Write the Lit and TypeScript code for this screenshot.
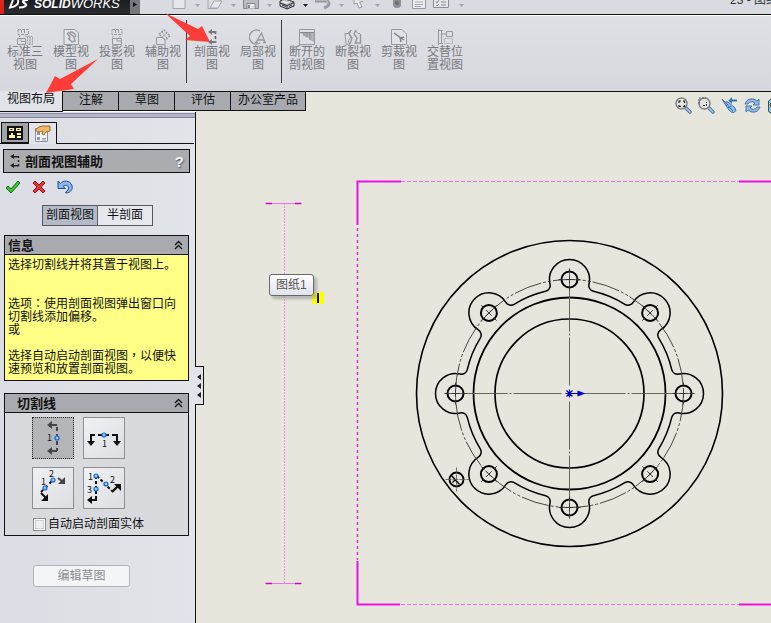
import { LitElement, html, svg, css } from "lit";
import { customElement, state } from "lit/decorators.js";

const S = (w: number, h: number, body: unknown) =>
  html`<svg width=${w} height=${h} viewBox="0 0 ${w} ${h}" fill="none" aria-hidden="true">${body}</svg>`;

/* ---------- title bar ---------- */
const dsLogo = S(24, 10, svg`<path d="M5 0 2 7.500C8 7 11 4 10 0" stroke="#fff" stroke-width="2"/>
  <path d="M20 0C14 0 14 2 17 3.500 20 5 17 7.500 11 7.500" stroke="#fff" stroke-width="2.200"/>`);

const quickIcons = {
  doc: S(18, 12, svg`<path d="M3 0V8.500H15V0" fill="#e6e7ea" stroke="#a4a6ab"/>`),
  open: S(18, 12, svg`<path d="M2 0V8.500H11L15 0" fill="#dcdde0" stroke="#a4a6ab"/><path d="M4 8 8 1H16L12 8Z" fill="#e8e8ea" stroke="#a4a6ab"/>`),
  save: S(18, 12, svg`<path d="M1.500 0V8.500H16.500V0" fill="#b9bbbf" stroke="#85878c"/><path d="M5 8.500V3.500H13V8.500" fill="#e6e7ea" stroke="#85878c"/><path d="M7 5V8" stroke="#85878c" stroke-width="2"/>`),
  print: S(18, 12, svg`<path d="M2 1 7-1 16 2V6L9 9 2 6Z" fill="#c4c5c8" stroke="#2f3034"/><path d="M2 3 9 5.500 16 2.500M9 5.500V9" stroke="#2f3034"/><path d="M4 1 9 3 12 1" stroke="#fff"/><path d="M4 5 8 6.500M11 6.500 14 5" stroke="#2f3034"/>`),
  undo: S(18, 12, svg`<path d="M1 1H11C16 1 17 5 10 8" stroke="#989a9f" stroke-width="3"/><path d="M2 0H10C14 0 15 3 10 6" stroke="#c9cacd"/>`),
  cursor: S(18, 12, svg`<path d="M4 0V4L7 3 9 8 12 7 9.500 2 13 1.500" fill="#eaebed" stroke="#9a9ca1"/>`),
  light: S(18, 12, svg`<path d="M5 0V5Q5 8 9 8T13 5V0Z" fill="#8d8f93"/><circle cx="9" cy="3" r="2" fill="#6b6d71"/>`),
  page: S(18, 12, svg`<path d="M2.500 0V8.500H15.500V0" fill="#ececee" stroke="#97999e"/><path d="M5 2H13M5 4.500H13M5 6.500H11" stroke="#a9abb0"/>`),
  list: S(18, 12, svg`<path d="M1.500 0V7.500H16.500V0" fill="#e4e5e8" stroke="#8c8e93"/><path d="M4 1.500 5 3 7 0M4 5 5 6 7 4M9 2H14M9 5H14" stroke="#85878c"/>`),
};
const caret = (c: string) => S(7, 4, svg`<path d="M1 0H6L3.500 3Z" fill=${c}/>`);

/* ---------- command ribbon ---------- */
const G = "#96989d";
const ribbonIcons = {
  standard: S(18, 16, svg`<g stroke=${G}><path d="M2 .500H12.500V5.500H2ZM5.500 1V5M8.500 1V5" stroke-dasharray="3 1"/><path d="M3.500 8V6.500M10 8V6.500M1.500 9.500H9.500V15.500H1.500Z"/><path d="M5 12.500H9M5 10V12"/><path d="M11.500 7.500H16.500V15.500H11.500Z" stroke-dasharray="2 1"/><path d="M14 8V15"/></g>`),
  model: S(18, 16, svg`<path d="M2 .500H13L16.500 4V15.500H2Z" stroke=${G} fill="#e2e3e7"/><path d="M5 4 8 8 7 11M6 3 12 8 13 12 10 13 6 9M8 3Q13 3 14 8" stroke=${G} stroke-width="1.400"/>`),
  projected: S(18, 16, svg`<g stroke=${G}><path d="M4 .500H14V5.500H4ZM7.500 1V5M10.500 1V5" stroke-dasharray="3 1"/><path d="M5 8.500V7M12 8.500V7"/><path d="M4.500 9.500H13.500V15.500H4.500Z" fill="#dfe0e4"/><path d="M9 10V12H13"/></g>`),
  auxiliary: S(18, 16, svg`<g stroke=${G}><path d="M5 5 10 1 16 7 11 11Z" stroke-dasharray="2 1" stroke-width="1.400"/><path d="M8 3 13 9M13 4 8 8" stroke-dasharray="2 1"/><path d="M2.500 8.500H8L11 11V15.500H2.500Z" fill="#dfe0e4"/></g>`),
  section: S(18, 16, svg`<path d="M12.500 2V14" stroke="#55575c" stroke-width="1.500" stroke-dasharray="3 2"/><path d="M5 3 9 0V2H13V4H9V6ZM5 13 9 10V12H13V14H9V16Z" fill="#77797e"/>`),
  detail: S(18, 16, svg`<path d="M11 2A7 7 0 1 0 11 14" stroke=${G} stroke-width="1.400"/><path d="M7 13.500 12.500 4 16 13.500M9 11H15M6 13.500H9M14 13.500H17" stroke=${G} stroke-width="1.300"/>`),
  broken: S(18, 16, svg`<path d="M1.500 .500H16.500V15.500H1.500Z" stroke=${G} fill="#dfe0e4"/><path d="M2 4 6 6 7 8 11 9 12 11 16 13V4Z" fill="#b2b4b8"/><path d="M2 3.500H16M6 4V7M9 4V8M12 4V11" stroke="#85878c"/>`),
  breakv: S(18, 16, svg`<path d="M1 4.500H4L7 1 5 4 7 8 4 12 6 15H2ZM16 4.500H14L11 1" stroke=${G}/><path d="M7 1 5 5 8 9 6 15M12 1 10 5 13 9 11 15M16.500 5V14H12" stroke=${G} stroke-width="1.400"/>`),
  crop: S(18, 16, svg`<path d="M1.500 .500H12L16.500 5V15.500H1.500Z" fill="#e1e2e6" stroke=${G}/><path d="M4 4 11 9 14 8M10 8 11 13M8 7 14 11" stroke="#7d7f84" stroke-width="1.500"/>`),
  alternate: S(18, 16, svg`<g stroke=${G}><path d="M2.500 0V16M2 1.500H7M2 14.500H7M5.500 1V15"/><path d="M10.500 2.500H16.500V7.500H10.500ZM6 5H10"/><path d="M8.500 9.500H16.500V14.500H8.500Z" stroke-dasharray="1 1"/></g>`),
};
type RIcon = keyof typeof ribbonIcons;
const ribbonGroups: [RIcon, string][][] = [
  [["standard", "标准三视图"], ["model", "模型视图"], ["projected", "投影视图"], ["auxiliary", "辅助视图"]],
  [["section", "剖面视图"], ["detail", "局部视图"]],
  [["broken", "断开的剖视图"], ["breakv", "断裂视图"], ["crop", "剪裁视图"], ["alternate", "交替位置视图"]],
];

/* ---------- property panel ---------- */
const treeIcon = S(18, 16, svg`<path d="M1 1H17V15H1Z" fill="#111"/><path d="M3 3H8V6H3ZM10 3H15V6H10ZM5 8H7V10H9V13H3V10H5ZM11 8H15V10H11ZM11 11H15V13H11Z" fill="#fff3a0"/><path d="M4.500 4.500H6.500M11.500 4.500H13.500" stroke="#111"/>`);
const propIcon = S(18, 18, svg`<path d="M1.500 3.500H13.500V16.500H1.500Z" fill="#f4f5f8" stroke="#8a8ea0"/><path d="M3 7H6V10H3ZM3 12H6V15H3Z" fill="#8f97b5"/><path d="M8 13.500H12M8 15H12" stroke="#9a9aa4"/><path d="M1 5 5 2 8 1 16 1V6L12 7 10 10 8 9 9 6 4 7Z" fill="#f0b765" stroke="#8a5a20" stroke-width=".800"/>`);
const sectionSmall = S(12, 16, svg`<path d="M9.500 3V14" stroke="#222" stroke-width="1.500" stroke-dasharray="2 2"/><path d="M1 3.500 5 1V3H10V4.500H5V6ZM1 12.500 5 10V12H10V13.500H5V15Z" fill="#222"/>`);
const okIcon = S(16, 14, svg`<path d="M1 8 3 6 6 9 13 1 15 3 6 13Z" fill="#3cc63c" stroke="#0c6d14"/>`);
const cancelIcon = S(16, 14, svg`<path d="M2 3 4 1 8 5 12 1 14 3 10 7 14 11 12 13 8 9 4 13 2 11 6 7Z" fill="#e23a3a" stroke="#981016"/>`);
const undoIcon = S(16, 14, svg`<path d="M1 1V8.500H8.500L6 6.500C9 4 12.500 6 11.500 9L8.500 13C14 13 16 9 15 5.500 13 0 6 0 3.500 3.500Z" fill="#8ab8ee" stroke="#1f4f9c"/>`);
const chevrons = S(9, 10, svg`<path d="M1 5 4.500 1.500 8 5M1 9 4.500 5.500 8 9" stroke="#111" stroke-width="1.300"/>`);
const dot = (x: number, y: number) => svg`<circle cx=${x} cy=${y} r="2" fill="#8cc8ff" stroke="#1d66c9" stroke-width="1.200"/>`;
const digit = (x: number, y: number, t: string) => svg`<text x=${x} y=${y} font-family="Noto Sans CJK SC" font-size="9" fill="#111">${t}</text>`;

const cutIcons = [
  { name: "竖直", icon: S(40, 40, svg`<g fill="#46464a"><path d="M14 7 19 3V6H24V8H19V11ZM14 33 19 29V32H24V34H19V37Z"/></g><path d="M24 9V33" stroke="#46464a" stroke-width="2" stroke-dasharray="4 3"/>${digit(14, 23, "1")}${dot(24, 20)}`) },
  { name: "水平", icon: S(40, 40, svg`<path d="M7 17H34" stroke="#111" stroke-width="2" stroke-dasharray="4 3"/><path d="M6 16H8V23H11L7 28 3 23H6ZM32 16H34V23H37L33 28 29 23H32Z" fill="#111"/>${dot(20, 17)}${digit(18, 29, "1")}`) },
  { name: "辅助", icon: S(40, 40, svg`<path d="M8 24 21 11" stroke="#111" stroke-width="2" stroke-dasharray="3 3"/><path d="M25 10 30 14" stroke="#444" stroke-width="2"/><path d="M32 9V16H25Z" fill="#444"/><path d="M8 25 13 30" stroke="#111" stroke-width="2"/><path d="M15 26V33H8Z" fill="#111"/>${dot(12, 20)}${dot(20, 12)}${digit(8, 17, "1")}${digit(16, 9, "2")}`) },
  { name: "对齐", icon: S(40, 40, svg`<path d="M12 8V32M13 8 28 23" stroke="#111" stroke-width="2" stroke-dasharray="3 2"/><path d="M3 32 8 28V31H13V33H8V36Z" fill="#111"/><path d="M28 24 34 18" stroke="#111" stroke-width="2.400"/><path d="M30 16H37V23Z" fill="#111"/>${dot(12, 8)}${dot(12, 21)}${dot(22, 16)}${digit(4, 12, "1")}${digit(3, 25, "3")}${digit(26, 15, "2")}`) },
];

/* ---------- view tools ---------- */
const lens = (extra: unknown) => S(17, 17, svg`<path d="M10.500 10.500 15 15" stroke="#4c6f98" stroke-width="3.400" stroke-linecap="round"/><path d="M11 11 15 15" stroke="#a9cdef" stroke-width="1.600" stroke-linecap="round"/><circle cx="6.500" cy="6.500" r="5.500" fill="#e4e4e0" stroke="#7b7d80" stroke-width="1.400"/>${extra}`);
const viewTools = [
  { name: "整屏显示全图", icon: lens(svg`<path d="M4 6V4H6M8 4H9.500V6M9.500 8V9.500H8M6 9.500H4V8" stroke="#222" stroke-width="1.200"/>`) },
  { name: "局部放大", icon: lens(svg`<path d="M1 7V1H8" stroke="#55575a" stroke-dasharray="2 1"/><path d="M5 8.500H8.500V5" stroke="#222" stroke-dasharray="2 1"/>`) },
  { name: "上一视图", icon: S(17, 17, svg`<path d="M1 2 4 5 7 5 14 11Q16 14 13 15.500 10 16 8 13L4 7Z" fill="#8ec1ea" stroke="#3a72ab"/><path d="M4 5 12 14M7 7 5 9M10 9 7 11" stroke="#3a72ab"/><path d="M16 3.500H10" stroke="#3a72ab" stroke-width="2"/><path d="M11 0V7L7.500 3.500Z" fill="#3a72ab"/>`) },
  { name: "重建", icon: S(17, 17, svg`<path d="M1 7Q3 1 9 2 11 2.300 13 4L15 2V8H9L11 6Q7 3 4 7Z" fill="#8db9e2" stroke="#4878ac"/><path d="M16 10Q14 16 8 15 6 14.700 4 13L2 15V9H8L6 11Q10 14 13 10Z" fill="#8db9e2" stroke="#4878ac"/>`) },
  { name: "显示样式", icon: S(17, 17, svg`<path d="M1.500 4 5 1H16V13L12 16H4Q1 16 1.500 12Z" fill="#9ac4d8" stroke="#3b4b4c"/><path d="M3 7Q7 2 12 6V13H5Z" fill="#d9d49a" stroke="#3b4b4c"/>`) },
];

/* ---------- flange geometry ---------- */
const LOBES = 8;
const PITCH_R = 114;
const LOBE_R = 20;
const RIM_R = 105;
const FILLET = 6;
const at = (r: number, a: number): [number, number] => [r * Math.sin(a), -r * Math.cos(a)];
const fmt = (p: [number, number]) => `${p[0].toFixed(2)} ${p[1].toFixed(2)}`;

function rimPath(): string {
  const c = RIM_R + FILLET;
  const l = LOBE_R + FILLET;
  const half = Math.acos((c * c + PITCH_R * PITCH_R - l * l) / (2 * c * PITCH_R));
  let d = "";
  for (let i = 0; i < LOBES; i++) {
    const a = (i * 2 * Math.PI) / LOBES;
    const hub = at(PITCH_R, a);
    const touch = (s: number): [number, number] => {
      const f = at(c, a + s * half);
      return [hub[0] + ((f[0] - hub[0]) * LOBE_R) / l, hub[1] + ((f[1] - hub[1]) * LOBE_R) / l];
    };
    const start = fmt(at(RIM_R, a - half));
    d += i === 0 ? `M${start}` : `A${RIM_R} ${RIM_R} 0 0 1 ${start}`;
    d += `A${FILLET} ${FILLET} 0 0 0 ${fmt(touch(-1))}`;
    d += `A${LOBE_R} ${LOBE_R} 0 1 1 ${fmt(touch(1))}`;
    d += `A${FILLET} ${FILLET} 0 0 0 ${fmt(at(RIM_R, a + half))}`;
  }
  return `${d}A${RIM_R} ${RIM_R} 0 0 1 ${fmt(at(RIM_R, -half))}Z`;
}

const flange = svg`<g transform="translate(373.500 301.500)" fill="none" stroke="#000">
  <circle r="153" stroke-width="1.600"/>
  <circle r="96" stroke-width="1.800"/>
  <circle r="74.500" stroke-width="1.700"/>
  <path d=${rimPath()} stroke-width="1.500"/>
  <circle r=${PITCH_R} stroke="#333" stroke-width=".900" stroke-dasharray="28 2 3 2 3 2"/>
  <path d="M-125 0H-62M-60 0H-58M-56 0H-8M15 0H56M58 0H60M62 0H125M0-125V-62M0-60V-58M0-56V-8M0 8V56M0 58V60M0 62V125" stroke="#555" stroke-width=".900"/>
  ${Array.from({ length: LOBES }, (_, i) => svg`<g transform="rotate(${i * 45}) translate(0 ${-PITCH_R})">
    <circle r="8" stroke-width="2"/><path d="M-4 0H4M0-4V4M-11 0H-7M7 0H11M0-11V-7M0 7V11" stroke="#333" stroke-width=".900"/></g>`)}
  <g transform="translate(-113 86)"><circle r="7" stroke-width="1.800"/><path d="M-5-4 3 5M-4 3-1 0" stroke-width="1.400"/><path d="M-11 0H13M0-12V12" stroke="#555" stroke-width=".800" stroke-dasharray="6 1"/></g>
  <path d="M-4 0H10M0-4V4M-3-3 3 3M-3 3 3-3" stroke="#0000c8" stroke-width="1.200"/>
  <path d="M8-3 16 0 8 3Z" fill="#0000c8" stroke="none"/>
</g>`;

const sheet = svg`<g fill="none">
  <path d="M88.500 111V491" stroke="#ee8fea" stroke-dasharray="2 1"/>
  <path d="M69 111.500H106M69 491.500H106" stroke="#ee6fe8"/>
  <path d="M70 111.500H76M99 111.500H105M70 491.500H76M99 491.500H105" stroke="#d400c8" stroke-width="1.600"/>
  <path d="M205 89.500H543M205 512.500H543" stroke="#f56cf0" stroke-dasharray="4 2"/>
  <path d="M161.500 136V468" stroke="#e41ce0" stroke-width="1.400" stroke-dasharray="3 3"/>
  <path d="M205 89.500H161.500V133M161.500 469V512.500H204M543 89.500H575M543 512.500H575" stroke="#ea12e6" stroke-width="2"/>
</g>`;

@customElement("app-root")
export class AppRoot extends LitElement {
  @state() private tab = 0;
  @state() private cut = 0;
  @state() private mode = 0;

  static styles = css`
    :host { display: block; position: relative; overflow: hidden; font: 12px/13px "Liberation Sans", "Noto Sans CJK SC", sans-serif; color: #111; }
    * { box-sizing: border-box; }
    button { font: inherit; color: inherit; border: 0; padding: 0; margin: 0; background: none; display: flex; align-items: center; justify-content: center; }
    svg { display: block; flex: none; }
    h1, h2, p { margin: 0; font: inherit; }
    .app { display: flex; flex-direction: column; min-height: 100vh; }

    .titlebar { display: flex; height: 15px; overflow: hidden; background: #d9dbe0; border-bottom: 1px solid #111; }
    .brand { display: flex; width: 130px; background: linear-gradient(#1a1c20, #2b2d32); border-left: 4px solid #dc2418; padding-left: 4px; gap: 2px; color: #fff; }
    .name { font-size: 13px; line-height: 14px; font-style: italic; margin-top: -3px; white-space: nowrap; }
    .name b { font-size: 12px; }
    .expand { width: 10px; background: #77797f; margin-right: 30px; }
    .quick { display: flex; flex: 1; align-items: flex-start; }
    .quick button { width: 18px; height: 12px; }
    .quick .wide { width: 22px; }
    .doc { width: 41px; white-space: nowrap; font-size: 12px; margin-top: -6px; color: #333; }

    .ribbon { display: flex; height: 77px; padding: 4px 2px; background: linear-gradient(#dfe0e5, #d6d8dd); border-top: 1px solid #fff; border-bottom: 1px solid #111; }
    .group { display: flex; }
    .group + .group { border-left: 1px solid #3a3b3f; padding-left: 2px; margin-bottom: 4px; }
    .group button { width: 46px; flex-direction: column; justify-content: flex-start; padding: 9px 4px 0; color: #77797e; gap: 1px; }

    .work { flex: 1; display: grid; grid-template-columns: 196px 1fr; grid-template-rows: 20px 1fr; }
    .tabs { grid-area: 1 / 1 / 2 / 3; display: flex; align-items: flex-start; z-index: 1; justify-self: start; }
    .tabs button { height: 19px; padding: 0 15px 2px 16px; background: #a8aaaf; border: solid #111; border-width: 0 1px 1px 0; }
    .tabs button:last-child { padding: 0 7px 2px; }
    .tabs .on { height: 21px; margin-top: -1px; padding: 0 7px 3px; background: #e1e3e8; }

    .panel { grid-area: 2 / 1; border-right: 1px solid #111; padding-top: 6px; display: flex; flex-direction: column; position: relative;
      background-image: linear-gradient(#8f8fa8 0 1px, #b4b4c8 1px 4px, #85859c 4px 5px, transparent 5px), linear-gradient(90deg, #dcdde4, #e1e4e9); background-size: 100% 5px, auto; background-position: 0 1px, 0 0; background-repeat: no-repeat; }
    .pages { display: flex; padding: 4px 1px 0; height: 26px; border-bottom: 1px solid #111; margin-right: 1px; }
    .pages button { width: 28px; height: 21px; border: 1px solid #111; background: #a2a3a8; }
    .pages .on { height: 22px; border-width: 1px 1px 0 0; background: #e3e5ea; }
    .head { margin: 5px 5px 0 3px; height: 24px; border: 1px solid #111; background: #abacb0; display: flex; align-items: center; padding: 0 5px; font-size: 13px; font-weight: bold; }
    .head h1 { flex: 1; margin-left: 4px; }
    .help { color: #eee; font-weight: bold; font-size: 15px; text-shadow: 1px 1px 1px #666; }
    .confirm { display: flex; gap: 10px; padding: 7px 5px 0; height: 32px; align-items: flex-start; }
    .modes { display: flex; align-self: center; border: 1px solid #55585f; height: 21px; }
    .modes button { width: 54px; background: #e6e8ed; }
    .modes .on { width: 55px; background: #b5bac9; border-right: 1px solid #666; }
    .box { margin: 9px 6px 0 4px; border: 1px solid #111; background: #d8dade; }
    .bar { display: flex; height: 19px; align-items: center; padding: 0 5px 0 3px; background: #a9aaaf; border-bottom: 1px solid #111; font-size: 13px; font-weight: bold; }
    .bar h2 { flex: 1; }
    .info { background: #ffff85; padding: 4px 3px; }
    .info p { min-height: 13px; }
    .mid { font-family: "Liberation Sans", "Noto Sans CJK TC", sans-serif; line-height: 1px; }
    .cuts { margin-top: 12px; }
    .cuts .bar { padding-left: 12px; }
    .grid { display: grid; grid-template-columns: 42px 42px; gap: 8px 9px; padding: 4px 0 0 27px; }
    .grid button { height: 42px; border: 1px solid #8d8f95; background: linear-gradient(135deg, #f0f1f4, #dcdee2); }
    .grid .on { background: #b4b5b8; border: 1px dotted #222; }
    .auto { display: flex; align-items: center; gap: 2px; padding: 7px 0 2px 28px; height: 26px; }
    .auto input { appearance: none; width: 13px; height: 13px; margin: 0; border: 1px solid #8b8d92; background: #eeeff1; box-shadow: inset 0 0 0 1px #fff, inset 0 0 0 2px #ccced2; }
    .edit { width: 97px; height: 22px; margin: 29px 0 0 33px; border: 1px solid #b1b3b8; border-radius: 3px; background: #f4f5f7; color: #8b8d91; }
    .handle { position: absolute; left: 195px; top: 254px; width: 9px; height: 39px; background: #e1e3e8; border: 1px solid #111; border-left: 0; z-index: 2; }

    .canvas { grid-area: 1 / 2 / 3 / 3; background: #e6e6dc; position: relative; overflow: hidden; min-height: 531px; }
    .drawing { width: 100%; height: 100%; }
    .views { position: absolute; top: 5px; right: -13px; display: flex; gap: 6px; }
    .tip { position: absolute; left: 73px; top: 182px; height: 22px; padding: 3px 6px; border: 1px solid #66686c; border-radius: 3px; background: linear-gradient(#fff, #e2e3ec); color: #555; box-shadow: 3px 3px 3px #8888; line-height: 14px; }
    .mark { position: absolute; left: 116px; top: 200px; width: 12px; height: 12px; background: #ff0; display: grid; place-items: center; }
    .mark::before { content: ""; width: 2px; height: 10px; background: #111; }
    .notes { position: absolute; left: 0; top: 0; z-index: 3; pointer-events: none; }
  `;

  render() {
    const q = quickIcons;
    const tabs = ["视图布局", "注解", "草图", "评估", "办公室产品"];
    const paired: [unknown, string][] = [[q.doc, "新建"], [q.open, "打开"], [q.save, "保存"], [q.print, "打印"], [q.undo, "撤消"], [q.cursor, "选择"]];
    return html`
      <div class="app">
        <header class="titlebar">
          <div class="brand">${dsLogo}<span class="name"><b>SOLID</b>WORKS</span></div>
          <button class="expand" aria-label="菜单">${S(6, 10, svg`<path d="M1 0 5 2.500 1 5Z" fill="#111"/>`)}</button>
          <nav class="quick">
            ${paired.map(([icon, name], i) => html`<button aria-label=${name}>${icon}</button><button aria-label="${name}选项">${caret(i === 3 ? "#222" : "#a0a2a7")}</button>`)}
            <button class="wide" aria-label="重建">${q.light}</button>
            <button class="wide" aria-label="属性">${q.page}</button>
            <button class="wide" aria-label="选项">${q.list}</button>
            <button aria-label="更多">${caret("#a0a2a7")}</button>
          </nav>
          <span class="doc">23 - 图纸</span>
        </header>
        <nav class="ribbon">
          ${ribbonGroups.map((g) => html`<div class="group">${g.map(([icon, label]) => html`<button>${ribbonIcons[icon]}<span>${label}</span></button>`)}</div>`)}
        </nav>
        <main class="work">
          <nav class="tabs">
            ${tabs.map((t, i) => html`<button class=${i === this.tab ? "on" : ""} @click=${() => (this.tab = i)}>${t}</button>`)}
          </nav>
          <aside class="panel">
            <div class="pages"><button aria-label="设计树">${treeIcon}</button><button class="on" aria-label="属性">${propIcon}</button></div>
            <div class="head">${sectionSmall}<h1>剖面视图辅助</h1><button class="help">?</button></div>
            <div class="confirm"><button aria-label="确定">${okIcon}</button><button aria-label="取消">${cancelIcon}</button><button aria-label="撤消">${undoIcon}</button></div>
            <div class="modes">
              ${["剖面视图", "半剖面"].map((t, i) => html`<button class=${i === this.mode ? "on" : ""} @click=${() => (this.mode = i)}>${t}</button>`)}
            </div>
            <section class="box">
              <div class="bar"><h2>信息</h2><button aria-label="折叠">${chevrons}</button></div>
              <div class="info">
                <p>选择切割线并将其置于视图上。</p><p></p><p></p>
                <p>选项<span class="mid">：</span>使用剖面视图弹出窗口向切割线添加偏移。</p>
                <p>或</p><p></p>
                <p>选择自动启动剖面视图<span class="mid">，</span>以便快速预览和放置剖面视图。</p>
              </div>
            </section>
            <section class="box cuts">
              <div class="bar"><h2>切割线</h2><button aria-label="折叠">${chevrons}</button></div>
              <div class="grid">
                ${cutIcons.map((c, i) => html`<button class=${i === this.cut ? "on" : ""} aria-label=${c.name} @click=${() => (this.cut = i)}>${c.icon}</button>`)}
              </div>
              <label class="auto"><input type="checkbox" />自动启动剖面实体</label>
            </section>
            <button class="edit" disabled>编辑草图</button>
            <button class="handle" aria-label="收起面板">${S(8, 26, svg`<path d="M6 1V7L2 4ZM6 10V16L2 13ZM6 19V25L2 22Z" fill="#222"/>`)}</button>
          </aside>
          <section class="canvas">
            <svg class="drawing" aria-label="法兰工程图">${sheet}${flange}</svg>
            <div class="views">${viewTools.map((v) => html`<button aria-label=${v.name}>${v.icon}</button>`)}</div>
            <div class="mark"></div>
            <div class="tip" role="tooltip">图纸1</div>
          </section>
        </main>
      </div>
      <svg class="notes" width="220" height="100" fill="#fb3d3a" aria-hidden="true">
        <path d="M165 13 198 29 202 26 210 42 185 40 190 36Z"/>
        <path d="M98 59 71 84 74 89 46 93 55 76 60 79Z"/>
      </svg>
    `;
  }
}
